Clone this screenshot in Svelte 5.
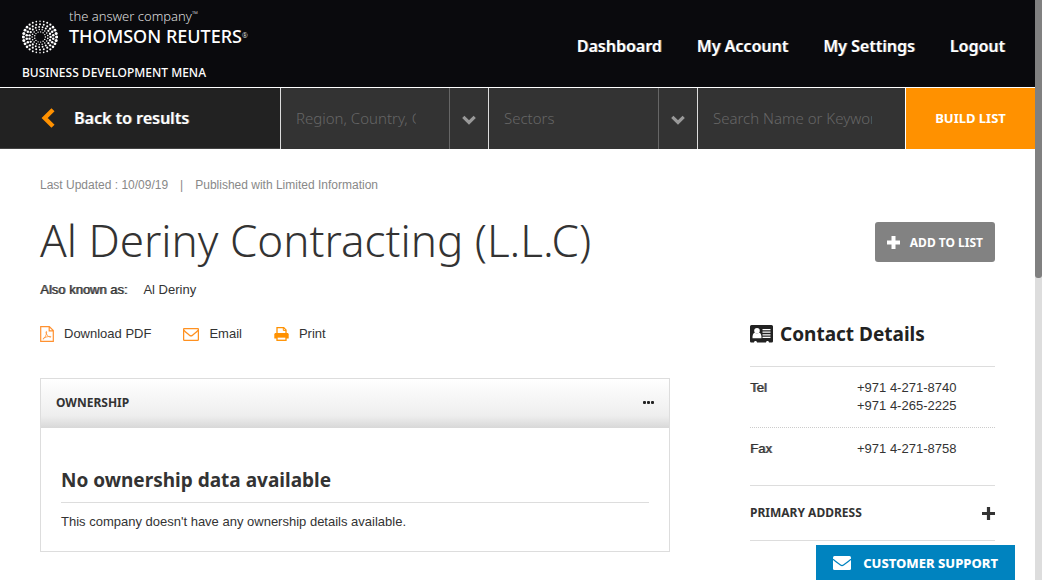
<script>
  const rings = [
    { r: 16.6, n: 28, base: 0.75, swing: 0.8 },
    { r: 13.4, n: 22, base: 0.95, swing: 0.35 },
    { r: 10.6, n: 19, base: 0.9, swing: 0.3 },
    { r: 7.9, n: 17, base: 0.7, swing: 0.1 },
    { r: 5.4, n: 13, base: 0.65, swing: 0.1 }
  ];
  const dots = rings.flatMap(({ r, n, base, swing }, ring) =>
    Array.from({ length: n }, (_, i) => {
      const a = ((i + (ring % 2) / 2) / n) * Math.PI * 2;
      return {
        x: 18 + r * Math.cos(a),
        y: 18 + 0.95 * r * Math.sin(a),
        s: base + swing * Math.pow(Math.abs(Math.cos(a)), 1.5)
      };
    })
  );
  const menu = ['Dashboard', 'My Account', 'My Settings', 'Logout'];
  const filters = [
    { id: 'region', label: 'Region', hint: 'Region, Country, City' },
    { id: 'sector', label: 'Sectors', hint: 'Sectors' }
  ];
  const contacts = [
    { label: 'Tel', numbers: ['+971 4-271-8740', '+971 4-265-2225'] },
    { label: 'Fax', numbers: ['+971 4-271-8758'] }
  ];
</script>

<div class="page">
  <header class="top">
    <a class="brand" href="#home">
      <span class="logo-row">
        <svg width="36" height="36" viewBox="0 0 36 36" aria-hidden="true">
          {#each dots as d}<circle cx={d.x} cy={d.y} r={d.s} fill="#fff" />{/each}
        </svg>
        <span class="names">
          <span class="tagline">the answer company<sup>™</sup></span>
          <span class="company">THOMSON REUTERS<sup>®</sup></span>
        </span>
      </span>
      <span class="division">BUSINESS DEVELOPMENT MENA</span>
    </a>
    <nav class="menu">
      {#each menu as item}<a href="#menu">{item}</a>{/each}
    </nav>
  </header>

  <form class="search">
    <a class="back" href="#results">
      <svg width="14" height="20" viewBox="0 0 14 20" aria-hidden="true">
        <path d="M12 1.800 3.700 10l8.300 8.200" fill="none" stroke="#ff9100" stroke-width="4.400" />
      </svg>
      Back to results
    </a>
    {#each filters as f}
      <div class="filter">
        <input id={f.id} type="text" placeholder={f.hint} aria-label={f.label} />
        <button type="button" class="toggle" aria-label="Open {f.label}">
          <svg width="14" height="10" viewBox="0 0 14 10" aria-hidden="true">
            <path d="M1.3 1.8 7 7.4l5.7-5.6" fill="none" stroke="#999" stroke-width="3.2" />
          </svg>
        </button>
      </div>
    {/each}
    <div class="filter">
      <input type="text" placeholder="Search Name or Keyword" aria-label="Search Name or Keyword" />
    </div>
    <button type="button" class="build">BUILD LIST</button>
  </form>

  <main>
    <p class="meta"><span>Last Updated : 10/09/19</span><span>|</span><span>Published with Limited Information</span></p>
    <div class="title-row">
      <h1>Al Deriny Contracting (L.L.C)</h1>
      <button type="button" class="add">
        <svg width="13" height="13" viewBox="0 0 13 13" aria-hidden="true"><path d="M6.5 0v13M0 6.5h13" stroke="#fff" stroke-width="4" /></svg>
        <span>ADD TO LIST</span>
      </button>
    </div>

    <div class="columns">
      <div class="left">
        <p class="aka"><b>Also known as:</b><span>Al Deriny</span></p>
        <div class="actions">
          <a href="#pdf">
            <svg width="14" height="16" viewBox="0 0 14 16" fill="none" stroke="#ff9130" aria-hidden="true">
              <path d="M.7.6h8.600l4 4v10.800H.7zM9.200.6v4.200h4" stroke-width="1.2" />
              <path d="M3 13.200c1.800-.8 3.700-4.800 3.700-7.200 0-.7-.9-.7-.8.2.2 2 2.300 4.900 4.600 5 .8 0 .6-.8-.3-.8-2.200 0-5 .7-6.700 1.900-.5.4-.8.700-.5.900" stroke-width=".8" />
            </svg>
            Download PDF
          </a>
          <a href="#email">
            <svg width="16" height="13" viewBox="0 0 16 13" fill="none" stroke="#ff9120" stroke-width="1.3" aria-hidden="true">
              <rect x=".6" y=".6" width="14.8" height="11.8" rx=".8" />
              <path d="M.8 2.300c2 2.200 4 3.500 5.700 4.900.9.800 2.100.8 3 0 1.700-1.400 3.700-2.700 5.700-4.900" />
            </svg>
            Email
          </a>
          <a href="#print">
            <svg width="15" height="14" viewBox="0 0 15 14" aria-hidden="true">
              <path d="M3 6.500V.6h6.700L12 2.900v3.600" fill="#fff" stroke="#ff9100" stroke-width="1.300" />
              <path d="M9.300.5v2.900h2.800" fill="none" stroke="#ff9100" />
              <path d="M1.800 6h11.400c1 0 1.500.7 1.500 1.500v4H.3v-4C.3 6.700.9 6 1.800 6z" fill="#ff9100" />
              <rect x="3" y="10" width="9" height="3.300" fill="#fff" stroke="#ff9100" stroke-width="1.300" />
            </svg>
            Print
          </a>
        </div>
        <section class="panel">
          <div class="panel-head">
            <h2>OWNERSHIP</h2>
            <button type="button" aria-label="More">
              <svg width="11" height="3" viewBox="0 0 11 3" aria-hidden="true"><g fill="#222"><rect width="3" height="3" rx="1" /><rect x="4" width="3" height="3" rx="1" /><rect x="8" width="3" height="3" rx="1" /></g></svg>
            </button>
          </div>
          <div class="panel-body">
            <h3>No ownership data available</h3>
            <p>This company doesn't have any ownership details available.</p>
          </div>
        </section>
      </div>

      <aside>
        <h2 class="contact-title">
          <svg width="23" height="18" viewBox="0 0 23 18" aria-hidden="true">
            <path d="M1.500 0h20A1.500 1.500 0 0 1 23 1.500v14.800a1.200 1.200 0 0 1-1.200 1.200H19c0-2-3-2-3 0H7c0-2-3-2-3 0H1.300A1.300 1.300 0 0 1 0 16.200V1.500A1.500 1.500 0 0 1 1.500 0z" fill="#222" />
            <circle cx="7" cy="5.800" r="2.800" fill="#fff" />
            <path d="M2.500 13.200c-.2-2.800.7-5 2.200-5.400q2.300 1.500 4.600 0c1.500.4 2.400 2.600 2.200 5.400z" fill="#fff" />
            <path d="M12.500 4.600h8M12.500 7.200h8M12.500 9.800h8M12.500 12.400h8" stroke="#fff" stroke-width="1.200" />
          </svg>
          Contact Details
        </h2>
        <dl>
          {#each contacts as c}
            <div>
              <dt>{c.label}</dt>
              <dd>{#each c.numbers as n}<span>{n}</span>{/each}</dd>
            </div>
          {/each}
        </dl>
        <button type="button" class="address">
          PRIMARY ADDRESS
          <svg width="13" height="13" viewBox="0 0 13 13" aria-hidden="true"><path d="M6.500 0v13M0 6.500h13" stroke="#333" stroke-width="3.200" /></svg>
        </button>
      </aside>
    </div>
  </main>

  <button type="button" class="support">
    <svg width="18" height="14" viewBox="0 0 18 14" aria-hidden="true">
      <rect width="18" height="14" rx="1.500" fill="#fff" />
      <path d="M0 3.300c2.500 2.300 5 3.900 7.500 5.700 1 .7 2 .7 3 0 2.500-1.800 5-3.400 7.500-5.700" fill="none" stroke="#0083bf" stroke-width="1.200" />
    </svg>
    CUSTOMER SUPPORT
  </button>
  <div class="rail"><div class="thumb"></div></div>
</div>

<style>
  :global(body) { margin: 0; background: #fff; overflow: hidden; }
  .page {
    min-height: 100vh;
    padding-right: 7px;
    box-sizing: border-box;
    color: #333;
    font: 13px/18px "Liberation Sans", Arial, sans-serif;
  }
  .page * { box-sizing: border-box; }
  a { color: inherit; text-decoration: none; }
  button { border: 0; padding: 0; background: none; cursor: pointer; font: inherit; color: inherit; }
  h1, h2, h3, p, dl, dd { margin: 0; }
  svg { flex: none; display: block; }

  .top {
    display: flex;
    justify-content: space-between;
    background: #0a0a0d;
    color: #fff;
    height: 88px;
    border-bottom: 1px solid #fff;
    padding: 6px 30px 0 22px;
    font-family: "Noto Sans", sans-serif;
  }
  .brand { display: flex; flex-direction: column; gap: 8px; }
  .logo-row { display: flex; align-items: flex-end; gap: 11px; height: 49px; }
  .names { display: flex; flex-direction: column; padding-bottom: 8px; }
  .tagline { font-size: 13px; line-height: 20px; font-weight: 300; color: #ddd; }
  .company { font-size: 18px; line-height: 21px; font-weight: 500; }
  sup { font-size: 8px; line-height: 0; vertical-align: 4px; font-weight: 300; }
  .company sup { font-size: 7px; vertical-align: 5px; }
  .division { font-size: 12px; line-height: 20px; font-weight: 500; }
  .menu { display: flex; gap: 35px; padding-top: 29px; font-size: 16px; line-height: 22px; }
  .menu, .back { font-weight: 600; text-shadow: 1px 0 rgba(255, 255, 255, 0.4); }

  .search {
    display: grid;
    grid-template-columns: 280fr 208fr 209fr 208fr 130fr;
    height: 61px;
    background: #333;
    font-family: "Noto Sans", sans-serif;
  }
  .back {
    display: flex; align-items: center; gap: 19px; padding-left: 41px;
    background: #222; color: #fff; font-size: 16px;
    border-bottom: 1px solid #444;
  }
  .filter { display: flex; border-left: 1px solid #ddd; min-width: 0; }
  .filter input {
    flex: 1; min-width: 0; margin: 0 33px 2px 15px; padding: 0; border: 0; outline: 0;
    background: transparent; color: #fff; font: 300 15px "Noto Sans", sans-serif;
  }
  .filter input::placeholder { color: #666; opacity: 1; }
  .toggle { width: 39px; border-left: 1px solid #666; display: grid; place-items: center; padding-top: 3px; }
  .build { background: #ff9100; color: #fff; font-weight: 700; font-size: 13px; border-left: 1px solid #fff; padding-bottom: 2px; }

  main { padding: 26px 40px 0; }
  .meta { display: flex; gap: 12px; font-size: 12px; line-height: 20px; color: #888; }
  .title-row { display: flex; justify-content: space-between; align-items: center; padding-top: 16px; }
  h1 { font: 300 44px/58px "Noto Sans", sans-serif; padding-bottom: 4px; }
  .add {
    display: flex; align-items: center; gap: 10px; height: 40px; padding: 0 12px;
    border-radius: 3px; background: #828282; color: #fff; font: 700 12px/18px "Noto Sans", sans-serif;
  }
  .add span { padding-top: 2px; }
  .columns { display: flex; gap: 80px; }
  .left { flex: 1; min-width: 0; }
  .aka { display: flex; gap: 16px; padding-top: 8px; }
  b, dt { font-weight: 400; text-shadow: 1px 0 rgba(51, 51, 51, 0.7); }
  .actions { display: flex; gap: 32px; margin-top: 26px; }
  .actions a { display: flex; align-items: center; gap: 10px; }
  .panel { margin-top: 35px; border: 1px solid #ddd; }
  .panel-head {
    display: flex; justify-content: space-between; align-items: center; height: 49px; padding: 0 15px 2px;
    background: linear-gradient(#fff, #eee 75%, #d8d8d8);
  }
  .panel-head h2 { font: 700 12px/18px "Noto Sans", sans-serif; }
  .panel-body { padding: 37px 20px 20px; }
  h3 { font: 700 19px/30px "Noto Sans", sans-serif; padding-bottom: 7px; border-bottom: 1px solid #ddd; }
  .panel-body p { padding-top: 10px; }

  aside { width: 245px; flex: none; padding-top: 46px; }
  .contact-title {
    display: flex; align-items: center; gap: 7px; padding-bottom: 17px; border-bottom: 1px solid #ddd;
    color: #222; font: 700 19px/30px "Noto Sans", sans-serif;
  }
  dl div { display: flex; padding: 12px 0; }
  dl div + div { border-top: 1px dotted #ccc; padding-bottom: 27px; }
  dt { width: 107px; }
  dd span { display: block; }
  .address {
    display: flex; justify-content: space-between; align-items: center; width: 100%; height: 56px;
    border: solid #ddd; border-width: 1px 0; font: 700 12px/18px "Noto Sans", sans-serif;
  }
  .support {
    position: fixed; right: 27px; bottom: 0; height: 35px; padding: 0 17px;
    display: flex; align-items: center; gap: 12px;
    background: #0083bf; color: #fff; font: 800 13px/18px "Noto Sans", sans-serif;
  }
  .rail { position: fixed; top: 0; right: 0; bottom: 0; width: 7px; background: #ddd; }
  .thumb { height: 48%; background: #808080; border-radius: 0 0 3px 3px; }
</style>
